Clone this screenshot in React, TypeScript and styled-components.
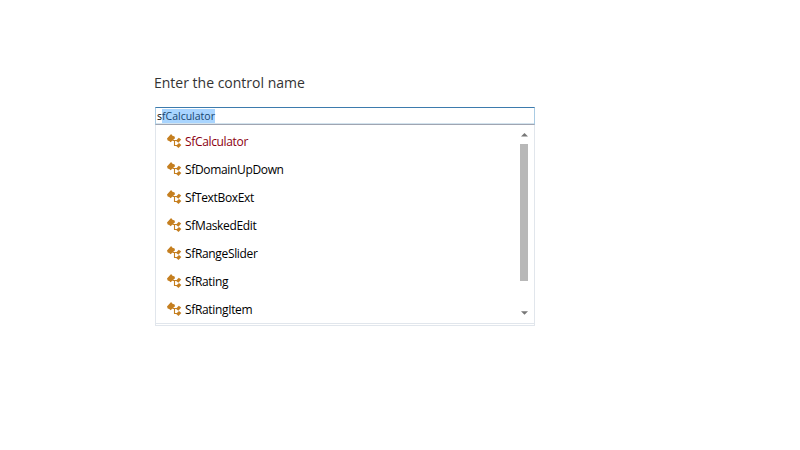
import React from "react";
import styled, { createGlobalStyle } from "styled-components";

const GlobalStyle = createGlobalStyle`
  * { box-sizing: border-box; }
  body { margin: 0; background: #fff; font-family: "Open Sans", "Noto Sans", sans-serif; }
`;

const Page = styled.main`
  width: 800px;
  height: 450px;
  padding: 72px 0 0 155px;
  background: #fff;
  overflow: hidden;
`;

const Label = styled.div`
  height: 35px;
  margin-left: -1px;
  line-height: 22px;
  font-size: 14px;
  color: #333;
  white-space: nowrap;
`;

const Field = styled.div`
  width: 380px;
  height: 18px;
  padding: 1px 0 0 1px;
  display: flex;
  border: 1px solid #a9cbe3;
  border-top-color: #3d7bad;
  border-bottom-color: #a0a5b2;
  box-shadow: inset 0 -1px #d3e3ee;
  font-size: 10.5px;
  line-height: 15px;
  color: #000;
`;

const Completion = styled.span`
  height: 14px;
  background: #a9d5ff;
  color: #17466f;
`;

const Dropdown = styled.div`
  width: 380px;
  height: 201px;
  padding-bottom: 1px;
  border: 1px solid #e1e6ec;
  border-top: 0;
`;

const Viewport = styled.div`
  height: 199px;
  display: flex;
  justify-content: space-between;
  border-bottom: 1px solid #e1e6ec;
`;

const List = styled.ul`
  margin: 0;
  padding: 3px 0 0 11px;
  list-style: none;
`;

const Item = styled.li<{ $selected: boolean }>`
  height: 28px;
  display: flex;
  align-items: center;
  gap: 3px;
  font-size: 12px;
  letter-spacing: -0.34px;
  line-height: 16px;
  white-space: nowrap;
  color: ${(p) => (p.$selected ? "#8b0010" : "#000")};
`;

const Scrollbar = styled.div`
  width: 8px;
  margin-right: 6px;
  padding: 8px 0 8px;
  display: flex;
  flex-direction: column;
  align-items: center;
`;

const Arrow = styled.svg`
  display: block;
  width: 7px;
  height: 4px;
  flex: none;
`;

const Thumb = styled.div`
  width: 8px;
  height: 137px;
  margin: 7px 0 auto;
  background: #b8b8b8;
`;

const IconBox = styled.svg`
  display: block;
  width: 15px;
  height: 14px;
  margin-top: -2px;
  flex: none;
`;

const ClassIcon = () => (
  <IconBox viewBox="0 0 15 14">
    <g fill="#c57f20">
      <path d="M0 4.6 4.1.1 5.5 1.7 7.6 2.6 8 4.2 3.6 8.3 2.2 6.9.7 6.5Z" />
      <path d="M8.9 6.8 11.8 3.7 14.2 5.4 11.4 8.8Z" />
      <path d="M9 11.8 12 9 14.3 11.1 11.5 14Z" />
    </g>
    <path d="M5.5 6.5H10M7.5 6.5V11.5H10.5" fill="none" stroke="#c57f20" strokeWidth="1.1" />
  </IconBox>
);

const controls = [
  "SfCalculator",
  "SfDomainUpDown",
  "SfTextBoxExt",
  "SfMaskedEdit",
  "SfRangeSlider",
  "SfRating",
  "SfRatingItem",
];

export default function App() {
  return (
    <>
      <GlobalStyle />
      <Page>
        <Label>Enter the control name</Label>
        <Field>
          s<Completion>fCalculator</Completion>
        </Field>
        <Dropdown>
          <Viewport>
            <List>
              {controls.map((name, i) => (
                <Item key={name} $selected={i === 0}>
                  <ClassIcon />
                  {name}
                </Item>
              ))}
            </List>
            <Scrollbar>
              <Arrow viewBox="0 0 7 4"><path d="M3.5 0 7 3.4H0Z" fill="#777" /></Arrow>
              <Thumb />
              <Arrow viewBox="0 0 7 4"><path d="M0 .3H7L3.5 3.8Z" fill="#777" /></Arrow>
            </Scrollbar>
          </Viewport>
        </Dropdown>
      </Page>
    </>
  );
}
